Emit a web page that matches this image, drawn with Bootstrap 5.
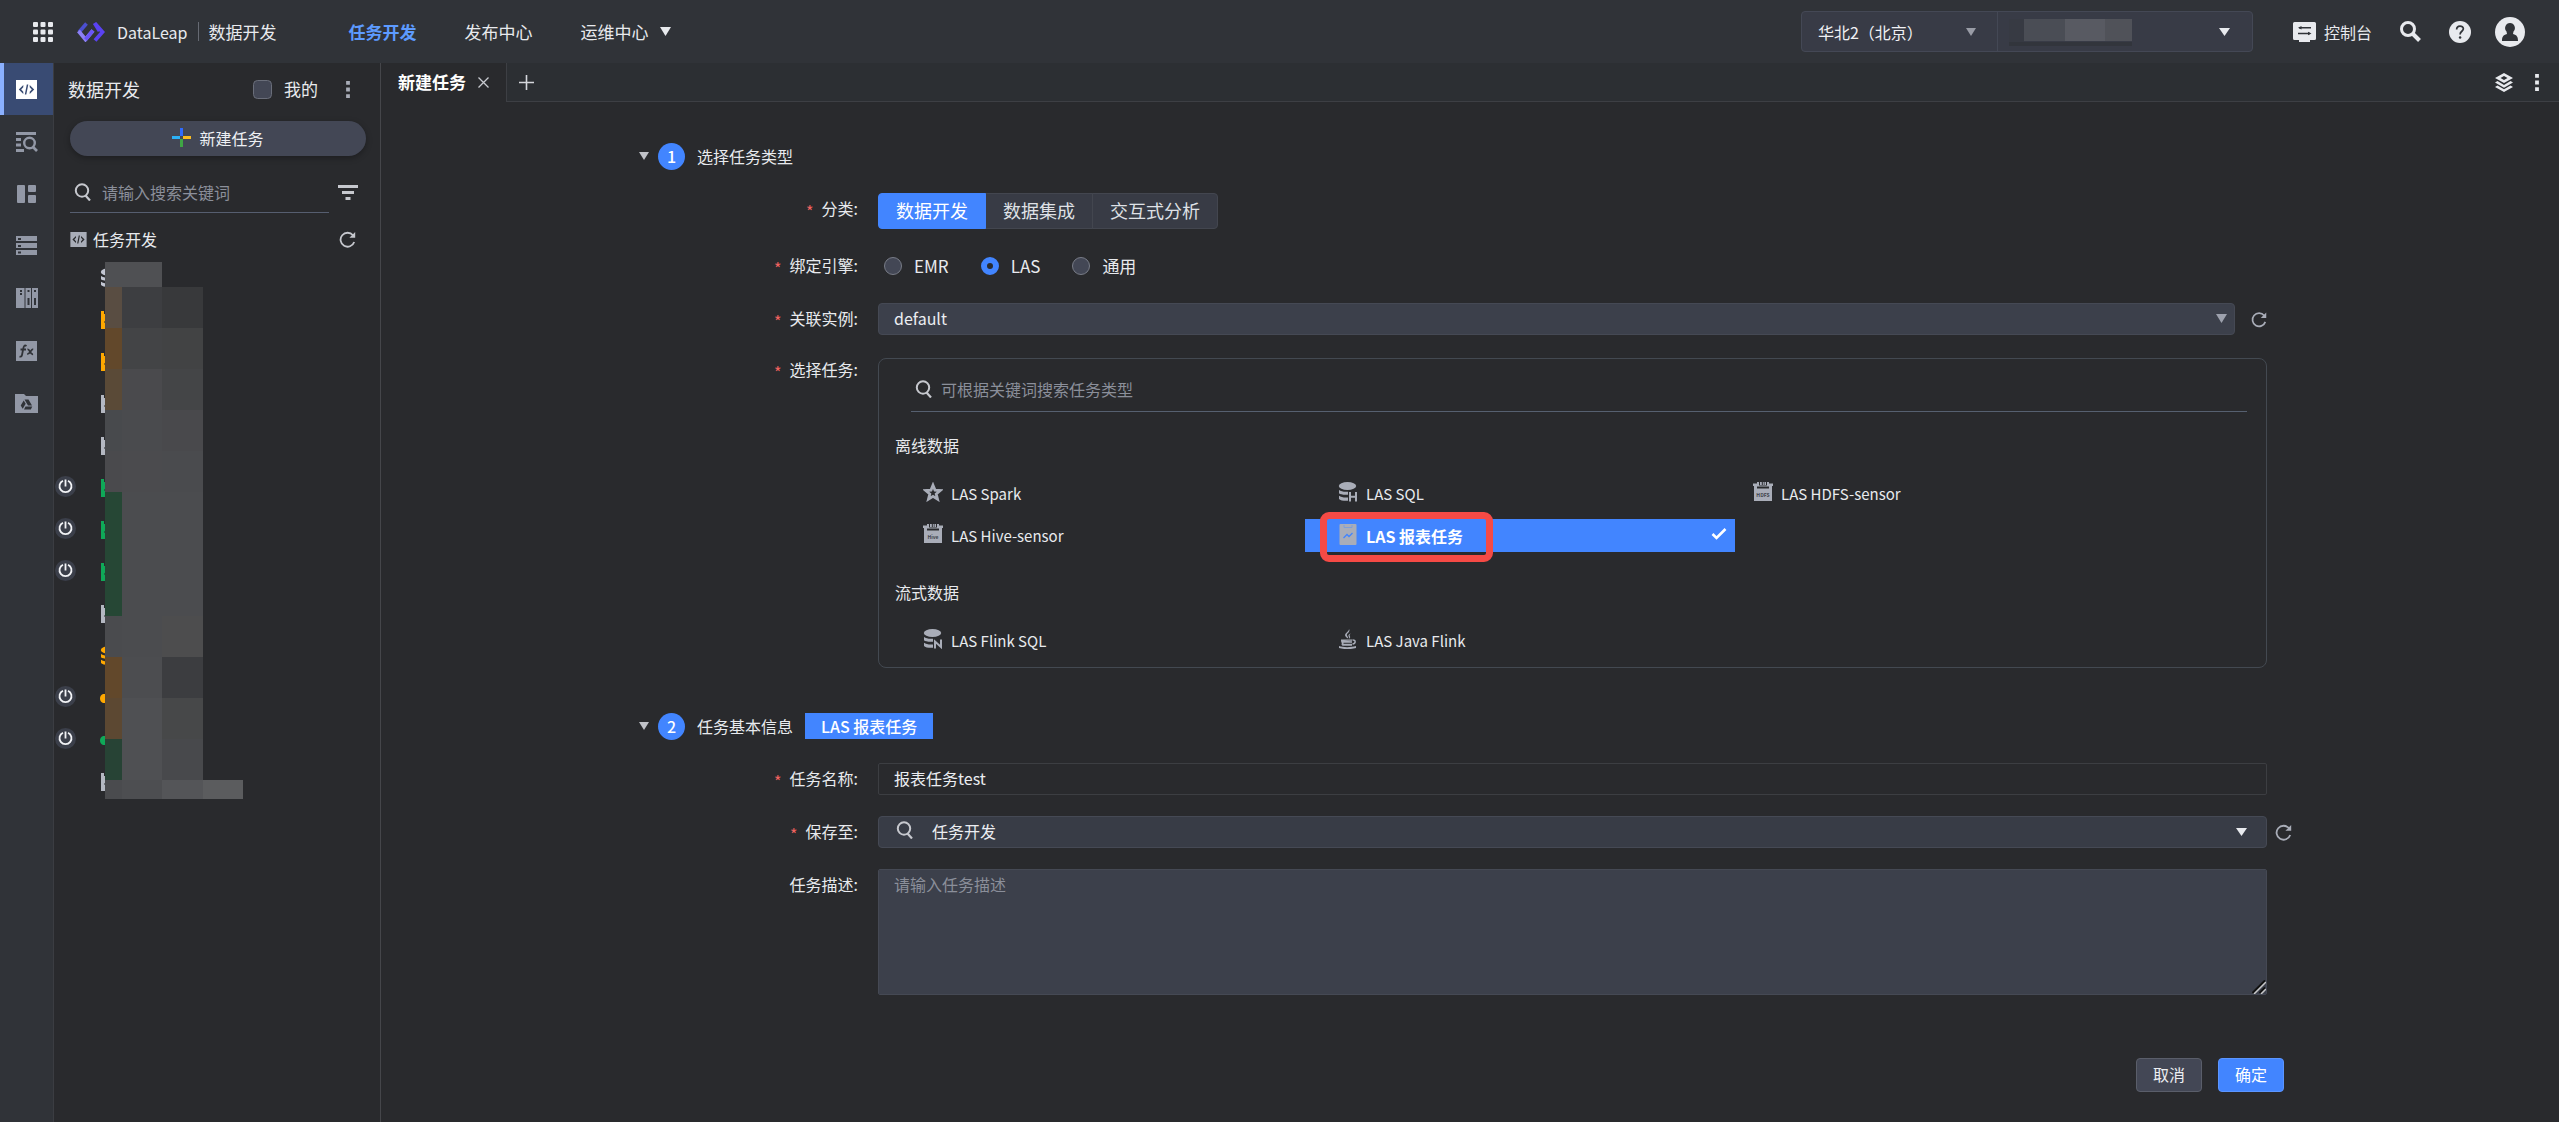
<!DOCTYPE html>
<html lang="zh-CN">
<head>
<meta charset="utf-8">
<meta name="viewport" content="width=device-width, initial-scale=1">
<title>DataLeap 数据开发</title>
<link href="https://cdn.jsdelivr.net/npm/bootstrap@5.3.0/dist/css/bootstrap.min.css" rel="stylesheet">
<style>
:root{--line:#43464f;--field:#3c404b;--blue:#4285ff;--soft:#a9adb8}
body{font-family:"Noto Sans CJK SC",sans-serif;font-size:16px;line-height:24px;color:#e8eaee;background:#292a2d}
svg{display:block;flex:none;fill:currentColor}
button{font-family:inherit}
.plain-btn{border:0;background:none;padding:0;color:inherit;display:flex;align-items:center}
.fs-nav{font-size:17px}
/* top bar */
.topbar{height:63px;background:#303338;padding:0 34px 0 33px}
.topbar a{color:#e8eaee;text-decoration:none}
.topbar a.on{color:#5d9bff;font-weight:700}
.topbar .brand-name{font-size:16px}
.brand-split{width:1px;height:19px;background:#666a73;margin:0 9px 0 11px}
.picker{height:41px;border:1px solid #444855;border-radius:4px;background:#383b46}
.picker .form-select{height:39px;border:0;border-radius:0;background-color:transparent;color:#f0f1f4;font-size:16px;padding:0 40px 0 16px;box-shadow:none}
.pick-region{width:196px;border-right:1px solid #444855!important;background-position:right 21px center;background-size:10px 8px;background-image:url("data:image/svg+xml,%3Csvg xmlns='http://www.w3.org/2000/svg' viewBox='0 0 10 8'%3E%3Cpath d='M0 0h10L5 8z' fill='%23999ca6'/%3E%3C/svg%3E")}
.pick-project{width:254px}
.white-caret{background-position:right 19px center;background-size:11px 8px;background-image:url("data:image/svg+xml,%3Csvg xmlns='http://www.w3.org/2000/svg' viewBox='0 0 11 8'%3E%3Cpath d='M0 0h11L5.5 8z' fill='%23e8eaee'/%3E%3C/svg%3E")}
.picker .white-caret{background-position:right 22px center}
.pick-mask{left:11px;top:7px}
/* icon rail */
.rail{width:54px;background:#303338;border-right:1px solid #3b3d42}
.rail-items{height:367px}
.rail-items a{color:#9298a6;border-left:4px solid transparent;padding-right:4px}
.rail-items a.on{color:#fff;background:#394b73;border-left-color:#8ab0ff}
/* task tree */
.tree-pane{width:327px;border-right:1px solid #45464a}
.tree-head{height:54px;font-size:18px;padding:0 30px 2px 14px}
.tree-head .form-check-input{width:19px;height:19px;margin:0;background-color:#434755;border:1px solid #6a6e7a}
.new-task{height:35px;border-radius:18px;background:#434755;color:#eef0f4;font-size:16px;padding:0 0 2px;box-shadow:0 2px 6px rgba(0,0,0,.3);margin:4px 14px 0 16px}
.find-row{margin-right:22px}
.find-line{border-bottom:1px solid #565e70;height:41px;width:259px}
.find-line input{margin-left:10px}
.find-line input,.task-find input{background:none;border:0;outline:0;color:#e8eaee;min-width:0;padding:0}
::placeholder{color:#8b8f9a!important;opacity:1}
.tree-root{gap:6px;padding:14px 0 6px}
.tree-list li{height:42px}
.tree-list svg.kind{margin-left:46px}
.tree-list .power{left:1px;top:9px}
.tree-mask{left:51px;top:5px}
/* tabs */
.tabs-bar{height:39px;background:#2c2f33;border-bottom:1px solid #3d3f44}
.tab-on{height:39px;width:126px;padding-left:17px;font-size:17px;font-weight:700;color:#fff;background:#292a2d;border-right:1px solid #3d3f44}
.layers{margin-right:22px}
/* form */
.task-form{margin:0 257px 0 258px;padding-top:41px}
.step{height:26px;margin-bottom:24px}
.step.second{margin-top:45px}
.step-no{width:27px;height:27px;border-radius:50%;background:var(--blue);color:#fff;margin:0 12px 0 9px;font-weight:500}
.step-tag{height:26px;background:var(--blue);color:#fff;font-weight:500;padding:0 16px;margin-left:12px}
.line{margin-bottom:21px;display:flex}
.line-label{width:239px;flex:none;padding-right:20px;text-align:right;line-height:31px}
.line-label.low{line-height:26px}
.must::before{content:"*";color:#f0625f;margin-right:8px;line-height:0;vertical-align:-3px}
.line-body{flex:1;min-width:0;margin-right:35px}
.line-body.wide{margin-right:8px}
.line-end{margin-right:10px}
.seg .btn{height:36px;font-size:18px;line-height:24px;padding:4px 17px;color:#dfe1e6;background:#383b45;border:1px solid var(--line);border-radius:4px}
.seg .btn-check:checked+.btn{background:var(--blue);border-color:var(--blue);color:#fff}
.engine{height:32px;font-size:17px;padding-left:6px}
.engine .form-check-input{width:18px;height:18px;margin:0 12px 0 0;background-color:#434755;border:1px solid #787c87}
.engine .form-check-input:checked{background-color:#292a2d;border:6px solid var(--blue);background-image:none}
.task-form .form-control,.task-form .form-select{height:32px;font-size:16px;line-height:24px;padding:2px 15px 4px;border:1px solid #454954;border-radius:4px;background-color:var(--field);color:#eceef2;box-shadow:none}
.task-form .bare{background-color:transparent;border-color:#3c3e42;border-radius:2px}
.task-form textarea.form-control{height:126px;border-radius:2px;resize:vertical}
textarea::-webkit-resizer{background:no-repeat center/14px url("data:image/svg+xml,%3Csvg xmlns='http://www.w3.org/2000/svg' viewBox='0 0 14 14'%3E%3Cpath d='M.5 13L13 .5M7.500 13L13 7.500' stroke='%23111' stroke-width='2'/%3E%3Cpath d='M2 14L14 2M9 14l5-5' stroke='%23c8c8c8' stroke-width='1.500'/%3E%3C/svg%3E")}
.gray-caret{background-position:right 7px top 10px;background-size:11px 9px;background-image:url("data:image/svg+xml,%3Csvg xmlns='http://www.w3.org/2000/svg' viewBox='0 0 11 9'%3E%3Cpath d='M0 0h11L5.5 9z' fill='%239da1ad'/%3E%3C/svg%3E")}
.task-form .save-to{padding-left:53px;background-color:#383c46}
.save-icon{left:18px;top:5px}
.reload{color:var(--soft)}
.task-box{border:1px solid #434951;border-radius:8px;min-height:310px;margin-top:2px;padding:0 19px 0 11px}
.task-find{border-bottom:1px solid #566070;height:53px;margin-left:21px}
.kind-name{height:24px;margin:21px 0 20px 5px}
.kinds+.kind-name{margin-top:28px}
.kinds{display:grid;grid-template-columns:repeat(3,1fr);row-gap:9px;margin-right:112px}
.kinds button{height:33px;padding-left:33px;margin-right:-15px;font-size:15px}
.kinds svg{color:var(--soft);margin:-3px 8px 0 0}
.kinds button.on{background:var(--blue);color:#fff;font-size:16px;font-weight:700;position:relative}
.kinds svg.tick{color:#fff;margin:-4px 8px 0 auto}
.callout-box{left:15px;top:-7px;width:173px;height:50px;border:7px solid #f54a45;border-radius:9px;pointer-events:none}
.foot{margin-top:63px;padding-right:18px;gap:16px}
.foot .btn{width:66px;height:34px;padding:0 0 2px;font-size:16px;border-radius:4px}
.foot .quiet{background:#434755;border:1px solid #5a5e6a;color:#eceef2}
.foot .go{background:var(--blue);border:1px solid #5b95ff;color:#fff}
</style>
<script src="https://cdn.jsdelivr.net/npm/bootstrap@5.3.0/dist/js/bootstrap.bundle.min.js"></script>
</head>
<body class="d-flex flex-column min-vh-100">
<svg width="0" height="0" class="position-absolute" aria-hidden="true">
<symbol id="i-find" viewBox="0 0 18 18"><circle cx="8" cy="7.500" r="6.200" fill="none" stroke="currentColor" stroke-width="2"/><path d="M11.500 12.500l4.500 5" stroke="currentColor" stroke-width="2.200" fill="none"/></symbol>
<symbol id="i-reload" viewBox="0 0 17 17"><path d="M14 4.300A7 7 0 1 0 15.200 11" fill="none" stroke="currentColor" stroke-width="1.800"/><path d="M16.200 1v5.800h-5.800z"/></symbol>
<symbol id="i-down" viewBox="0 0 10 8"><path d="M0 0h10L5 8z"/></symbol>
<symbol id="i-code" viewBox="0 0 21 19"><path fill-rule="evenodd" d="M0 0h21v19H0zM7.300 5L2.800 9.500l4.500 4.500V11.700L5.200 9.500l2.100-2.200zM13.700 5v2.300l2.100 2.200-2.100 2.200V14l4.500-4.500zM10.800 4.500L8.800 14.500h1.500l2-10z"/></symbol>
<symbol id="i-dots" viewBox="0 0 4 18"><path d="M0 0h4v4H0zM0 7h4v4H0zM0 14h4v4H0z"/></symbol>
<symbol id="i-db" viewBox="0 0 20 20"><ellipse cx="9.500" cy="4" rx="8.700" ry="4"/><path d="M1 8c2 1.500 5 2 9 1.700v3C6 13 2 12.500 1 11.300zM1 13.800c2 1.500 5 2 9 1.700v3.300C6 19 2 18.500 1 17z"/></symbol>
<symbol id="i-sensor" viewBox="0 0 20 20"><path fill-rule="evenodd" d="M0 1.500h4V0h2v3.500h8V0h2v1.500h4V4h-1v15H1V4H0zM4 4.500v2h12v-2zM7 0h1.800v3H7zM9.800 0h1v3h-1zM11.500 0h1.500v3h-1.500z"/></symbol>
<symbol id="i-doc" viewBox="0 0 20 20"><path d="M1 1h18v18H1z"/><path d="M4 1h3v3H4zM4.500 11h5v2h-5z" fill="#292a2d"/></symbol>
<symbol id="i-power" viewBox="0 0 21 21"><circle cx="10.500" cy="10.500" r="10.500" fill="#3b3f4a"/><path d="M8 4.700a6 6 0 1 0 5 0M10.500 3.500v7" fill="none" stroke="#f2f3f6" stroke-width="1.800"/></symbol>
<symbol id="i-python" viewBox="0 0 20 20"><path d="M6 2h8v7H6v2H5v4H3c-4-1-4-8 0-9h3zM5 12h9V5h2c4 1 4 8 0 9h-3v4H5z"/></symbol>
</svg>

<header class="topbar d-flex align-items-center fs-nav">
  <button class="plain-btn" aria-label="应用"><svg width="20" height="20" viewBox="0 0 20 20"><g><rect width="5" height="5" rx="1"/><rect x="7.500" width="5" height="5" rx="1"/><rect x="15" width="5" height="5" rx="1"/><rect y="7.500" width="5" height="5" rx="1"/><rect x="7.500" y="7.500" width="5" height="5" rx="1"/><rect x="15" y="7.500" width="5" height="5" rx="1"/><rect y="15" width="5" height="5" rx="1"/><rect x="7.500" y="15" width="5" height="5" rx="1"/><rect x="15" y="15" width="5" height="5" rx="1"/></g></svg></button>
  <a href="#" class="d-flex align-items-center"><svg class="ms-4 me-2" width="28" height="20" viewBox="0 0 28 20" fill="none"><path d="M9.500 1.500L2.200 10" stroke="#4b4fd0" stroke-width="3.600" fill="none"/><path d="M1.500 9l7 8.500 7.500-9" stroke="#8c80f5" stroke-width="3.800" fill="none"/><path d="M8.500 17.500l7.500-9" stroke="#6a55f8" stroke-width="3.800" fill="none"/><path d="M18 1.500l7.500 8.500-7.500 8.500M17.500 1l5 8" stroke="#5a42f2" stroke-width="3.800" fill="none"/></svg><span class="brand-name ms-1">DataLeap</span></a>
  <span class="brand-split"></span>
  <a href="#">数据开发</a>
  <nav class="d-flex align-items-center gap-5 ms-5">
    <a href="#" class="on ms-4">任务开发</a>
    <a href="#">发布中心</a>
    <a href="#" class="d-flex align-items-center">运维中心<svg class="ms-2 ps-1" width="15" height="9" viewBox="0 0 10 8"><use href="#i-down"/></svg></a>
  </nav>
  <div class="picker d-flex ms-auto">
    <select class="form-select pick-region" aria-label="地域"><option>华北2（北京）</option></select>
    <div class="position-relative">
      <select class="form-select white-caret pick-project" aria-label="项目"><option></option></select>
      <svg class="pick-mask position-absolute pe-none" width="123" height="27" viewBox="0 0 123 27"><path fill="#373a43" d="M0 0h15v23H0z"/><path fill="#4a4d55" d="M15 0h41v22H15z"/><path fill="#585a62" d="M56 0h40v22H56z"/><path fill="#505259" d="M96 0h27v22H96z"/><path fill="#32353c" d="M0 23h123v4H0z"/></svg>
    </div>
  </div>
  <button class="plain-btn ms-4 ps-3 gap-2 fs-6"><svg width="23" height="20" viewBox="0 0 23 20"><path d="M1.500 0h20A1.500 1.500 0 0 1 23 1.500v15a1.500 1.500 0 0 1-1.500 1.500H17v2H6v-2H1.500A1.500 1.500 0 0 1 0 16.500v-15A1.500 1.500 0 0 1 1.500 0z"/><path d="M6 5.800h12M5 11.500h12" stroke="#303338" stroke-width="1.600"/><path d="M5 5.800L8.500 4v3.600zM18.500 11.500L15 9.700v3.600z" fill="#303338"/></svg>控制台</button>
  <button class="plain-btn ms-4" aria-label="搜索"><svg class="ms-1" width="21" height="21" viewBox="0 0 21 21"><circle cx="8" cy="8" r="6.500" fill="none" stroke="currentColor" stroke-width="3"/><path d="M12.500 12.500l7 7" stroke="currentColor" stroke-width="4"/></svg></button>
  <button class="plain-btn ms-4" aria-label="帮助"><svg class="ms-1" width="22" height="22" viewBox="0 0 23 23"><circle cx="11.500" cy="11.500" r="11.500"/><path d="M8 9c0-5 7-4.500 7-.8 0 2.500-3.400 2.600-3.400 5.800" fill="none" stroke="#303338" stroke-width="1.800"/><circle cx="11.600" cy="17.300" r="1.300" fill="#303338"/></svg></button>
  <button class="plain-btn ms-4" aria-label="账号"><svg width="30" height="30" viewBox="0 0 30 30"><circle cx="15" cy="15" r="15"/><path fill="#303338" d="M15 6a4.800 5 0 0 1 3.500 8.500L18 17c4 1 5 3 5 7H7c0-4 1-6 5-7l-.5-2.500A4.800 5 0 0 1 15 6z"/></svg></button>
</header>

<div class="d-flex flex-grow-1">
  <nav class="rail flex-shrink-0">
    <div class="rail-items d-flex flex-column">
      <a href="#" class="on flex-fill d-flex align-items-center justify-content-center" aria-label="开发"><svg width="21" height="19"><use href="#i-code"/></svg></a>
      <a href="#" class="flex-fill d-flex align-items-center justify-content-center" aria-label="查询"><svg width="22" height="20" viewBox="0 0 22 20"><path d="M0 0h20v3H0zM0 6h5v3H0zM0 11.500h5v3H0zM0 17h8v3H0z"/><circle cx="13.500" cy="11" r="5.300" fill="none" stroke="currentColor" stroke-width="2.400"/><path d="M17 15l4 4" stroke="currentColor" stroke-width="2.600"/></svg></a>
      <a href="#" class="flex-fill d-flex align-items-center justify-content-center" aria-label="面板"><svg width="20" height="18" viewBox="0 0 20 18"><rect width="8" height="18" rx="1"/><rect x="11" width="8" height="7" rx="1"/><rect x="11" y="10" width="8" height="8" rx="1"/></svg></a>
      <a href="#" class="flex-fill d-flex align-items-center justify-content-center" aria-label="资源"><svg width="21" height="19" viewBox="0 0 21 19"><path d="M0 0h21v5H0zM0 7h21v5H0zM0 14h21v5H0z"/><path fill="#303338" d="M2 2h3v2H2zM2 9h3v2H2zM2 15.500h3v2H2z"/></svg></a>
      <a href="#" class="flex-fill d-flex align-items-center justify-content-center" aria-label="库"><svg width="22" height="20" viewBox="0 0 22 20"><path d="M0 0h8.500v20H0zM9.500 0H15v20H9.500zM16 0h6v20h-6z"/><path fill="#303338" d="M4 2h2v2H4zM4 5h2v2H4zM11.500 2h2v2h-2zM18 2h2v2h-2zM11.500 10h2v7h-2zM18 10h2v7h-2z"/></svg></a>
      <a href="#" class="flex-fill d-flex align-items-center justify-content-center" aria-label="函数"><svg width="21" height="20" viewBox="0 0 21 20"><path d="M0 0h21v20H0z"/><path d="M10.500 5c-2-1.500-3 .5-3.300 3L6 14c-.3 1.500-1.300 2-2.500 1.500M4.500 8.500H10M11.500 8.500c2.500-.8 2.500 5.500 5.500 4.700M17.200 8.200c-2.500 0-3 5-6 5" fill="none" stroke="#303338" stroke-width="1.800"/></svg></a>
      <a href="#" class="flex-fill d-flex align-items-center justify-content-center" aria-label="文件"><svg width="23" height="19" viewBox="0 0 23 19"><path d="M0 0h9l2 2h12v17H0z"/><path fill="#303338" d="M9.500 5.500h4L17 11.500h-4zM8.700 6.500l2 3.300-3 5-2-3.300zM10.500 12.500h6.800l-1.500 3H9z"/></svg></a>
    </div>
  </nav>

  <aside class="tree-pane flex-shrink-0">
    <div class="tree-head d-flex align-items-center">
      <span>数据开发</span>
      <input class="form-check-input ms-auto" type="checkbox" id="mine"><label for="mine" class="fs-nav ps-2 ms-1 me-4">我的</label>
      <button class="plain-btn ms-1" aria-label="更多"><svg width="4" height="17" color="#a9adb8"><use href="#i-dots"/></svg></button>
    </div>
    <div class="d-grid"><button class="btn new-task d-flex align-items-center justify-content-center gap-2"><svg width="19" height="19" viewBox="0 0 19 19"><path fill="#2f6bff" d="M8 0h3v8H8z"/><path fill="#2cb1f5" d="M0 8h8v3H0z"/><path fill="#fbbc1f" d="M11 8h8v3h-8z"/><path fill="#3fa645" d="M8 11h3v8H8z"/></svg>新建任务</button></div>
    <div class="find-row d-flex align-items-center justify-content-between ms-3 pt-3">
      <div class="find-line d-flex align-items-center ps-1"><svg width="18" height="18" color="#c6c8ce"><use href="#i-find"/></svg><input class="flex-fill" placeholder="请输入搜索关键词" aria-label="搜索关键词"></div>
      <button class="plain-btn" aria-label="筛选"><svg width="20" height="15" viewBox="0 0 20 15" color="#c6c8ce"><path d="M0 0h20v3H0zM4 6h12v3H4zM7.500 12h5v3h-5z"/></svg></button>
    </div>
    <div class="tree-root d-flex align-items-center ms-3 me-4"><svg width="17" height="15" class="reload" viewBox="0 0 21 19"><use href="#i-code"/></svg><span>任务开发</span><button class="plain-btn ms-auto" aria-label="刷新"><svg width="17" height="17" color="#c6c8ce"><use href="#i-reload"/></svg></button></div>
    <div class="position-relative">
      <ul class="tree-list list-unstyled m-0" id="tree"></ul>
      <svg class="tree-mask position-absolute" id="mask" width="138" height="537" viewBox="0 0 138 537"></svg>
    </div>
  </aside>

  <main class="flex-fill">
    <div class="tabs-bar d-flex align-items-center">
      <div class="tab-on d-flex align-items-center"><span>新建任务</span><button class="plain-btn ms-2 ps-1" aria-label="关闭"><svg width="11" height="11" viewBox="0 0 11 11"><path d="M.5.5l10 10M10.500.5l-10 10" stroke="#c9cbd1" stroke-width="1.300"/></svg></button></div>
      <button class="plain-btn ms-2 ps-1" aria-label="新增"><svg width="15" height="15" viewBox="0 0 15 15"><path d="M7.500 0v15M0 7.500h15" stroke="#d5d7dc" stroke-width="1.600"/></svg></button>
      <button class="plain-btn layers ms-auto" aria-label="图层"><svg width="18" height="19" viewBox="0 0 18 19"><path fill-rule="evenodd" d="M9 0l9 5-9 5L0 5zM9 3L5.500 5 9 7 12.500 5zM0 9.500L2.500 8 9 12l6.500-4L18 9.500l-9 5.300zM0 14l2.500-1.500L9 16.300l6.500-3.800L18 14l-9 5z"/></svg></button>
      <button class="plain-btn me-3" aria-label="更多"><svg class="me-1" width="4" height="17"><use href="#i-dots"/></svg></button>
    </div>

    <form class="task-form" onsubmit="return false">
      <div class="step d-flex align-items-center"><svg width="10" height="8" color="#c0c2c8"><use href="#i-down"/></svg><span class="step-no d-flex align-items-center justify-content-center">1</span>选择任务类型</div>

      <div class="line"><span class="line-label must">分类:</span>
        <div class="line-body"><div class="btn-group seg" role="group" aria-label="分类">
          <input type="radio" class="btn-check" name="cat" id="c1" checked><label class="btn" for="c1">数据开发</label>
          <input type="radio" class="btn-check" name="cat" id="c2"><label class="btn" for="c2">数据集成</label>
          <input type="radio" class="btn-check" name="cat" id="c3"><label class="btn" for="c3">交互式分析</label>
        </div></div></div>

      <div class="line"><span class="line-label must">绑定引擎:</span>
        <div class="line-body engine d-flex align-items-center">
          <input class="form-check-input" type="radio" name="eng" id="e1"><label class="me-4 pe-2" for="e1">EMR</label>
          <input class="form-check-input" type="radio" name="eng" id="e2" checked><label class="me-4 pe-2" for="e2">LAS</label>
          <input class="form-check-input" type="radio" name="eng" id="e3"><label for="e3">通用</label>
        </div></div>

      <div class="line"><label class="line-label must" for="inst">关联实例:</label>
        <div class="line-body d-flex align-items-center"><select class="form-select gray-caret" id="inst"><option>default</option></select><button type="button" class="plain-btn reload ps-3" aria-label="刷新实例"><svg width="16" height="17"><use href="#i-reload"/></svg></button></div></div>

      <div class="line"><label class="line-label must low" for="tfind">选择任务:</label>
        <div class="line-body task-box">
          <div class="task-find d-flex align-items-center pt-2"><svg width="18" height="18" color="#c6c8ce" class="ms-1"><use href="#i-find"/></svg><input id="tfind" class="flex-fill ms-2" placeholder="可根据关键词搜索任务类型"></div>
          <div class="kind-name">离线数据</div>
          <div class="kinds">
            <button type="button" class="plain-btn"><svg width="20" height="20" viewBox="0 0 20 20"><path fill="none" stroke="currentColor" stroke-width="2.800" d="M10 3.200l2 4.900 5.300.4-4.100 3.400 1.300 5.200L10 14.300l-4.500 2.800 1.300-5.200-4.100-3.400 5.300-.4z"/></svg>LAS Spark</button>
            <button type="button" class="plain-btn"><svg width="20" height="20" viewBox="0 0 20 20"><use href="#i-db"/><path d="M12 10v9.500M18 10v9.500M12 14.700h6" stroke="currentColor" stroke-width="2"/></svg>LAS SQL</button>
            <button type="button" class="plain-btn"><svg width="20" height="20" viewBox="0 0 20 20"><use href="#i-sensor"/><text x="10" y="14.500" font-size="5" text-anchor="middle" fill="#40434b" font-weight="700">HDFS</text></svg>LAS HDFS-sensor</button>
            <button type="button" class="plain-btn"><svg width="20" height="20" viewBox="0 0 20 20"><use href="#i-sensor"/><text x="10" y="14.500" font-size="5" text-anchor="middle" fill="#40434b" font-weight="700">Hive</text></svg>LAS Hive-sensor</button>
            <button type="button" class="plain-btn on"><svg width="20" height="21" viewBox="0 0 20 21"><path d="M2.500 0h15a1 1 0 0 1 1 1v19a1 1 0 0 1-1 1h-15a1 1 0 0 1-1-1V1a1 1 0 0 1 1-1z"/><path d="M6 1v2.500h8V1" fill="none" stroke="#7f9fd8"/><path d="M5.500 14L9 10.500l2 2L14.500 9" fill="none" stroke="#4285ff" stroke-width="1.300"/></svg>LAS 报表任务<svg class="tick" width="16" height="12" viewBox="0 0 16 12"><path d="M1.500 6l4 4 9-9" fill="none" stroke="currentColor" stroke-width="2.600"/></svg><span class="callout-box position-absolute"></span></button>
          </div>
          <div class="kind-name">流式数据</div>
          <div class="kinds">
            <button type="button" class="plain-btn"><svg width="20" height="20" viewBox="0 0 20 20"><use href="#i-db"/><path d="M12 19.500v-7l6 5.500v-7.500" fill="none" stroke="currentColor" stroke-width="2"/></svg>LAS Flink SQL</button>
            <button type="button" class="plain-btn"><svg width="20" height="20" viewBox="0 0 20 20"><path d="M11 0c2 3-3 4.500-2 6.500.4 1 1.500 2 1.200 3C6 7 6.500 5 9 3.200 10.500 2 11 1.200 11 0zM13 4.500c-2 1-1.500 2-1 3 .4.800 0 1.500-.8 2.200C11.500 8 10 7.600 10.500 6.300 11 5.200 12 4.600 13 4.500z"/><path d="M3 10.500h11v1.300H6l8 .5v1.500H5.500v1H14v2H5.500c-2 0-2.500-2-1.500-2.500-1-1-1-2.500-1-3.800zM1 17c4 1.500 12 1.500 17 0v2c-4 1.500-13 1.500-17 0z"/><path d="M14.500 11c3.500-.3 3.500 3.500 0 4" fill="none" stroke="currentColor" stroke-width="1.500"/></svg>LAS Java Flink</button>
          </div>
        </div></div>

      <div class="step second d-flex align-items-center"><svg width="10" height="8" color="#c0c2c8"><use href="#i-down"/></svg><span class="step-no d-flex align-items-center justify-content-center">2</span>任务基本信息<span class="step-tag d-flex align-items-center">LAS 报表任务</span></div>

      <div class="line"><label class="line-label must" for="tname">任务名称:</label><div class="line-body"><input class="form-control bare" id="tname" value="报表任务test"></div></div>
      <div class="line"><label class="line-label must" for="tsave">保存至:</label>
        <div class="line-body wide position-relative"><select class="form-select white-caret save-to" id="tsave"><option>任务开发</option></select><svg class="save-icon position-absolute pe-none" width="18" height="18" color="#c6c8ce"><use href="#i-find"/></svg></div>
        <button type="button" class="plain-btn reload line-end" aria-label="刷新目录"><svg width="17" height="17"><use href="#i-reload"/></svg></button></div>
      <div class="line"><label class="line-label" for="tdesc">任务描述:</label><div class="line-body"><textarea class="form-control" id="tdesc" placeholder="请输入任务描述"></textarea></div></div>
      <div class="foot d-flex justify-content-end"><button type="button" class="btn quiet">取消</button><button type="submit" class="btn go">确定</button></div>
    </form>
  </main>
</div>
<script>
// tree rows: icon, colour, whether the task is running
const rows=[['db','#c2c6d2'],['doc','#ffa800'],['doc','#ffa800'],['doc','#b4b8c2'],['doc','#b4b8c2'],['doc','#0fa958',1],['doc','#0fa958',1],['doc','#0fa958',1],['doc','#b4b8c2'],['db','#ffa800'],['python','#ffa800',1],['python','#0fa958',1],['doc','#b4b8c2']];
document.getElementById('tree').innerHTML=rows.map(([k,c,on])=>`<li class="position-relative d-flex align-items-center">${on?'<svg class="power position-absolute" width="21" height="21"><use href="#i-power"/></svg>':''}<svg class="kind" width="20" height="20" color="${c}"><use href="#i-${k}"/></svg></li>`).join('');
// blocks that hide the task names: y, height, colours of the columns
const xs=[0,17,57,98,138];
const blocks=[[0,25,['#4f5053','#4f5053']],[25,41,['#594d42','#3d3e41','#38393b']],[66,41,['#62482b','#434446','#424344']],[107,41,['#5a4a37','#4a4a4d','#444547']],[148,41,['#484a4d','#4a4b4e','#49494c']],[189,41,['#4a4a4d','#4b4b4e','#4a4b4e']],[230,124,['#264735','#4b4c4f','#4b4c4f']],[354,41,['#4a4b4e','#4b4c4f','#4d4d4e']],[395,41,['#62482b','#4c4d50','#3c3d40']],[436,41,['#5c4832','#4f5053','#474849']],[477,41,['#274335','#4f5053','#48494c']],[518,19,['#4a4b4e','#4d4e51','#545558','#5b5c5e']]];
document.getElementById('mask').innerHTML=blocks.map(([y,h,cs])=>cs.map((c,i)=>`<rect x="${xs[i]}" y="${y}" width="${xs[i+1]-xs[i]}" height="${h}" fill="${c}"/>`).join('')).join('');
</script>
</body>
</html>
